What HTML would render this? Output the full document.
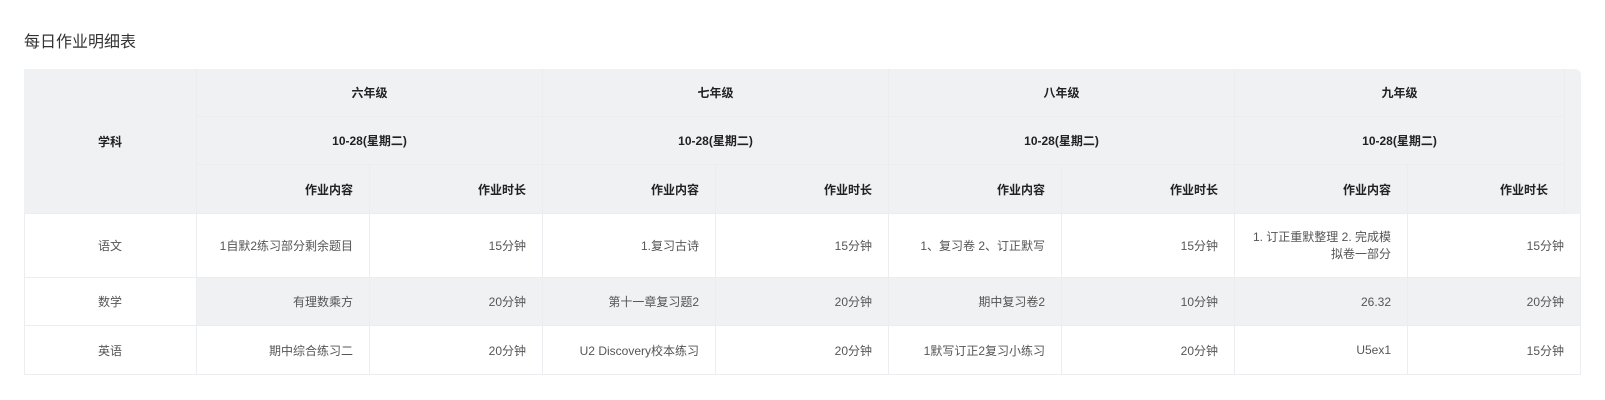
<!DOCTYPE html>
<html><head><meta charset="utf-8"><style>
body{margin:0;width:1605px;height:400px;background:#fff;font-family:"Liberation Sans","Noto Sans CJK SC",sans-serif;position:relative;overflow:hidden}
.t{position:absolute;left:24px;top:28px;font-size:16px;color:#333}
.c{position:absolute;box-sizing:border-box;display:flex;align-items:center;justify-content:flex-end;padding:0 16px;font-size:12px;color:#555;border-right:1px solid #ebedf0;border-bottom:1px solid #ebedf0}
.h{background:#f0f1f3;color:#222;font-weight:bold}
.m{justify-content:center}
.g{background:#f0f1f3}
.wrap{display:inline-block;width:141px;line-height:17px;text-align:right;word-break:break-all}
</style></head><body>
<div class="t">每日作业明细表</div>
<div style="position:absolute;left:24px;top:69px;width:1557px;height:145px;background:#f0f1f3;border-radius:6px 6px 0 0"></div>
<div style="position:absolute;left:24px;top:214px;width:1px;height:161px;background:#ebedf0"></div>
<div id="root"></div>
<script>
var X=[24,197,370,543,716,889,1062,1235,1408,1581];
var H='';
function cell(x1,x2,y1,y2,txt,cls){H+='<div class="c '+cls+'" style="left:'+x1+'px;top:'+y1+'px;width:'+(x2-x1)+'px;height:'+(y2-y1)+'px">'+txt+'</div>';}
cell(24,197,69,214,'学科','h m');
var g=['六年级','七年级','八年级','九年级'];
for(var i=0;i<4;i++){var a=X[1+2*i],b=X[3+2*i];var bb=(i==3)?1565:b;
cell(a,bb,69,117,g[i],'h m');cell(a,bb,117,165,'10-28(星期二)','h m');
cell(a,X[2+2*i],165,214,'作业内容','h');cell(X[2+2*i],bb,165,214,'作业时长','h');}
var R=[[214,278,'语文',['1自默2练习部分剩余题目','15分钟','1.复习古诗','15分钟','1、复习卷 2、订正默写','15分钟','<span class="wrap">1. 订正重默整理 2. 完成模拟卷一部分</span>','15分钟'],''],
[278,326,'数学',['有理数乘方','20分钟','第十一章复习题2','20分钟','期中复习卷2','10分钟','26.32','20分钟'],'g'],
[326,375,'英语',['期中综合练习二','20分钟','U2 Discovery校本练习','20分钟','1默写订正2复习小练习','20分钟','U5ex1','15分钟'],'']];
R.forEach(function(r){cell(24,197,r[0],r[1],r[2],'m');for(var j=0;j<8;j++)cell(X[j+1],X[j+2],r[0],r[1],r[3][j],r[4]);});
document.getElementById('root').innerHTML=H;
</script>
</body></html>
